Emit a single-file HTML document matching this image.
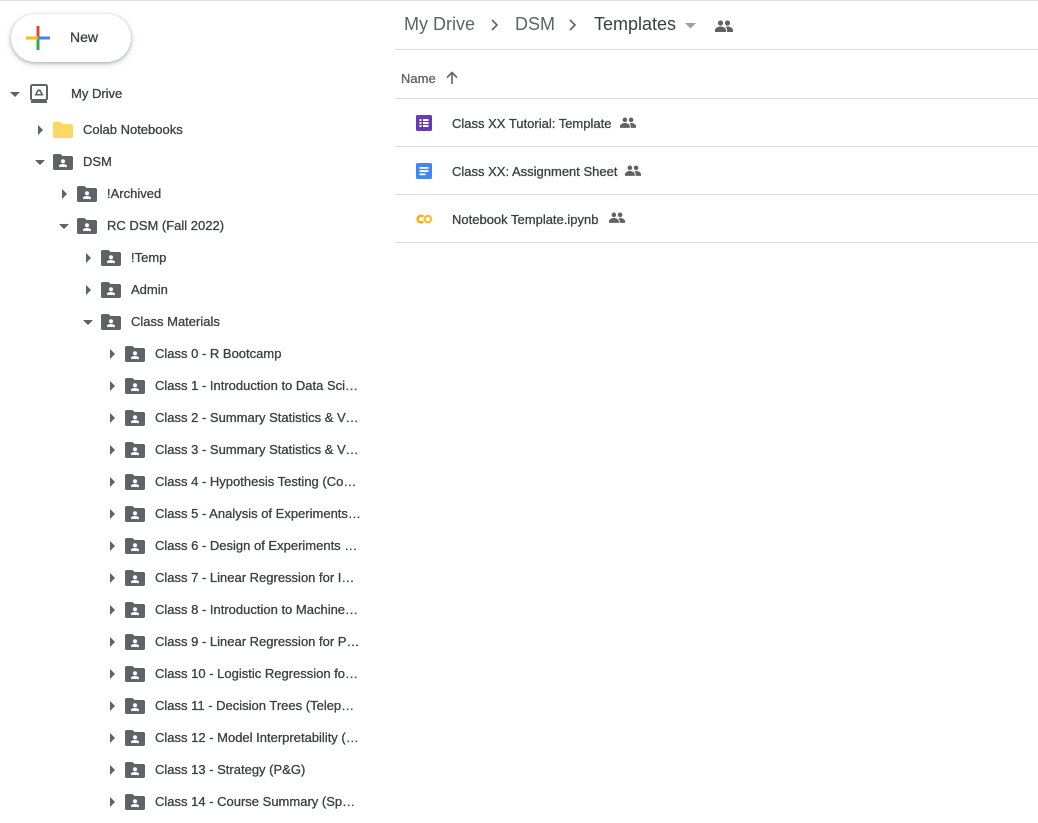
<!DOCTYPE html>
<html><head><meta charset="utf-8">
<style>
*{margin:0;padding:0;box-sizing:border-box}
body{width:1038px;height:823px;overflow:hidden;background:#fff;font-family:"Liberation Sans",Arial,sans-serif;position:relative;color:#3c4043}
.topline{position:absolute;left:0;top:0;width:1038px;height:1px;background:#dadce0}
.new{position:absolute;left:11px;top:14px;width:120px;height:48px;border-radius:24px;background:#fff;box-shadow:0 1px 3px rgba(60,64,67,.35),0 2px 6px 1px rgba(60,64,67,.15)}
.new span{position:absolute;left:59px;top:15px;font-size:14px;color:#3c4043;-webkit-text-stroke:0.3px #3c4043}
.row{position:absolute;height:20px;font-size:13px;white-space:nowrap}
.row .arr{position:absolute;top:5px}
.row .ic{position:absolute;top:2px}
.row .tx{position:absolute;top:2px;overflow:hidden;text-overflow:ellipsis;color:#3c4043;-webkit-text-stroke:0.3px #3c4043}
.bc{position:absolute;top:14px;font-size:18px;color:#5f6368}
.hl{position:absolute;left:395px;width:643px;height:1px;background:#dadce0}
.file{position:absolute;left:452px;font-size:13px;color:#3c4043;-webkit-text-stroke:0.3px #3c4043}
</style></head><body>
<div class="topline"></div>
<div class="new">
<svg style="position:absolute;left:15px;top:12px" width="24" height="24" viewBox="0 0 24 24">
<rect x="10.5" y="0" width="3" height="12" fill="#ea4335"/>
<rect x="12" y="10.5" width="12" height="3" fill="#4285f4"/>
<rect x="10.5" y="12" width="3" height="12" fill="#34a853"/>
<rect x="0" y="10.5" width="12" height="3" fill="#fbbc04"/>
</svg>
<span>New</span></div>

<div class="row" style="left:0;top:84px;width:380px">
<svg class="arr" style="left:10px;top:8px" width="10" height="5"><path d="M0 0L10 0L5 5Z" fill="#5f6368"/></svg>
<svg style="position:absolute;left:30px;top:0" width="18" height="20" viewBox="0 0 18 20"><rect x="1" y="1" width="16" height="15" rx="1.5" fill="none" stroke="#5f6368" stroke-width="2"/><rect x="1" y="17" width="16" height="2" fill="#5f6368"/><path d="M4.5 11.5L7.5 5.5H10.5L13.5 11.5Z" fill="#5f6368"/><path d="M7 10L8.3 7.5H9.7L11 10Z" fill="#fff"/></svg>
<span class="tx" style="left:71px;top:2px">My Drive</span>
</div>

<div id="tree"></div>

<div class="bc" style="left:404px">My Drive</div>
<svg style="position:absolute;left:490px;top:19px" width="9" height="12"><path d="M2 1L7 6L2 11" fill="none" stroke="#5f6368" stroke-width="1.6"/></svg>
<div class="bc" style="left:515px">DSM</div>
<svg style="position:absolute;left:568px;top:19px" width="9" height="12"><path d="M2 1L7 6L2 11" fill="none" stroke="#5f6368" stroke-width="1.6"/></svg>
<div class="bc" style="left:594px;color:#3c4043">Templates</div>
<svg style="position:absolute;left:685px;top:23px" width="11" height="6"><path d="M0 0L11 0L5.5 5.5Z" fill="#9aa0a6"/></svg>
<svg style="position:absolute;left:715px;top:20px" width="18" height="12" viewBox="0 0 18 12"><circle cx="5.5" cy="3" r="2.6" fill="#5f6368"/><circle cx="12.5" cy="3" r="2.6" fill="#5f6368"/><path d="M0 12V10C0 8 3 6.5 5.5 6.5S11 8 11 10V12Z" fill="#5f6368"/><path d="M12 12V10C12 8.8 11.5 7.7 10.6 6.8C11.2 6.6 11.9 6.5 12.5 6.5C15 6.5 18 8 18 10V12Z" fill="#5f6368"/></svg>

<div class="hl" style="top:49px"></div>
<div style="position:absolute;left:401px;top:71px;font-size:13px;color:#5f6368;-webkit-text-stroke:0.3px #5f6368">Name</div>
<svg style="position:absolute;left:446px;top:71px" width="12" height="13"><path d="M6 13V2M1 6.5L6 1.5L11 6.5" fill="none" stroke="#5f6368" stroke-width="1.6"/></svg>
<div class="hl" style="top:98px"></div>
<div class="hl" style="top:146px"></div>
<div class="hl" style="top:194px"></div>
<div class="hl" style="top:242px"></div>

<svg style="position:absolute;left:416px;top:115px" width="16" height="16"><rect width="16" height="16" rx="1.5" fill="#673ab7"/><g fill="#fff"><rect x="3.5" y="4" width="2" height="2"/><rect x="7" y="4" width="5.5" height="2"/><rect x="3.5" y="7" width="2" height="2"/><rect x="7" y="7" width="5.5" height="2"/><rect x="3.5" y="10" width="2" height="2"/><rect x="7" y="10" width="5.5" height="2"/></g></svg>
<div class="file" style="top:116px">Class XX Tutorial: Template</div>
<svg style="position:absolute;left:620px;top:117px" width="16" height="11" viewBox="0 0 18 12"><circle cx="5.5" cy="3" r="2.6" fill="#5f6368"/><circle cx="12.5" cy="3" r="2.6" fill="#5f6368"/><path d="M0 12V10C0 8 3 6.5 5.5 6.5S11 8 11 10V12Z" fill="#5f6368"/><path d="M12 12V10C12 8.8 11.5 7.7 10.6 6.8C11.2 6.6 11.9 6.5 12.5 6.5C15 6.5 18 8 18 10V12Z" fill="#5f6368"/></svg>

<svg style="position:absolute;left:416px;top:163px" width="16" height="16"><rect width="16" height="16" rx="1.5" fill="#4285f4"/><g fill="#fff"><rect x="3.5" y="4" width="9" height="1.8"/><rect x="3.5" y="7.2" width="9" height="1.8"/><rect x="3.5" y="10.4" width="6" height="1.8"/></g></svg>
<div class="file" style="top:164px">Class XX: Assignment Sheet</div>
<svg style="position:absolute;left:625px;top:165px" width="16" height="11" viewBox="0 0 18 12"><circle cx="5.5" cy="3" r="2.6" fill="#5f6368"/><circle cx="12.5" cy="3" r="2.6" fill="#5f6368"/><path d="M0 12V10C0 8 3 6.5 5.5 6.5S11 8 11 10V12Z" fill="#5f6368"/><path d="M12 12V10C12 8.8 11.5 7.7 10.6 6.8C11.2 6.6 11.9 6.5 12.5 6.5C15 6.5 18 8 18 10V12Z" fill="#5f6368"/></svg>

<svg style="position:absolute;left:416px;top:213px" width="17" height="12"><path d="M7.2 3.6A3.3 3.3 0 1 0 7.2 8.4" fill="none" stroke="#f9ab00" stroke-width="2.4"/><circle cx="11.8" cy="6" r="3.2" fill="none" stroke="#fbc02d" stroke-width="2.4"/></svg>
<div class="file" style="top:212px">Notebook Template.ipynb</div>
<svg style="position:absolute;left:609px;top:212px" width="16" height="11" viewBox="0 0 18 12"><circle cx="5.5" cy="3" r="2.6" fill="#5f6368"/><circle cx="12.5" cy="3" r="2.6" fill="#5f6368"/><path d="M0 12V10C0 8 3 6.5 5.5 6.5S11 8 11 10V12Z" fill="#5f6368"/><path d="M12 12V10C12 8.8 11.5 7.7 10.6 6.8C11.2 6.6 11.9 6.5 12.5 6.5C15 6.5 18 8 18 10V12Z" fill="#5f6368"/></svg>

<script>
var rows=[
[1,129,"Colab Notebooks",0,1],
[1,161,"DSM",1,0],
[2,193,"!Archived",0,0],
[2,225,"RC DSM (Fall 2022)",1,0],
[3,257,"!Temp",0,0],
[3,289,"Admin",0,0],
[3,321,"Class Materials",1,0],
[4,353,"Class 0 - R Bootcamp",0,0],
[4,385,"Class 1 - Introduction to Data Science",0,0],
[4,417,"Class 2 - Summary Statistics & Visualization",0,0],
[4,449,"Class 3 - Summary Statistics & Visualization",0,0],
[4,481,"Class 4 - Hypothesis Testing (Coke)",0,0],
[4,513,"Class 5 - Analysis of Experiments (X)",0,0],
[4,545,"Class 6 - Design of Experiments (X)",0,0],
[4,577,"Class 7 - Linear Regression for Inference",0,0],
[4,609,"Class 8 - Introduction to Machine Learning",0,0],
[4,641,"Class 9 - Linear Regression for Prediction",0,0],
[4,673,"Class 10 - Logistic Regression for Classification",0,0],
[4,705,"Class 11 - Decision Trees (Telepass)",0,0],
[4,737,"Class 12 - Model Interpretability (Xyz)",0,0],
[4,769,"Class 13 - Strategy (P&G)",0,0],
[4,801,"Class 14 - Course Summary (Spain)",0,0]];
var h="";
rows.forEach(function(r){
 var L=r[0],y=r[1]-9,ax=16+24*L,ix=53+24*(L-1),tx=ix+30;
 var arr=r[3]?'<svg class="arr" style="left:'+(ax-5)+'px;top:8px" width="10" height="5"><path d="M0 0L10 0L5 5Z" fill="#5f6368"/></svg>'
 :'<svg class="arr" style="left:'+(ax-2)+'px;top:5px" width="5" height="10"><path d="M0 0L5 5L0 10Z" fill="#5f6368"/></svg>';
 var ic=r[4]?'<svg class="ic" style="left:'+ix+'px" width="20" height="16" viewBox="0 0 20 16"><path d="M1.5 0H7.5L9.5 2H18.5C19.3 2 20 2.7 20 3.5V14.5C20 15.3 19.3 16 18.5 16H1.5C.7 16 0 15.3 0 14.5V1.5C0 .7.7 0 1.5 0Z" fill="#fdd663"/></svg>'
 :'<svg class="ic" style="left:'+ix+'px" width="20" height="16" viewBox="0 0 20 16"><path d="M1.5 0H7.5L9.5 2H18.5C19.3 2 20 2.7 20 3.5V14.5C20 15.3 19.3 16 18.5 16H1.5C.7 16 0 15.3 0 14.5V1.5C0 .7.7 0 1.5 0Z" fill="#5f6368"/><circle cx="10" cy="7.2" r="2" fill="#fff"/><path d="M6 13V12C6 10.6 8.5 10 10 10S14 10.6 14 12V13Z" fill="#fff"/></svg>';
 h+='<div class="row" style="left:0;top:'+y+'px;width:380px">'+arr+ic+'<span class="tx" style="left:'+tx+'px;max-width:'+(361-tx)+'px">'+r[2].replace(/&/g,"&amp;")+'</span></div>';
});
document.getElementById("tree").innerHTML=h;
</script>
</body></html>
